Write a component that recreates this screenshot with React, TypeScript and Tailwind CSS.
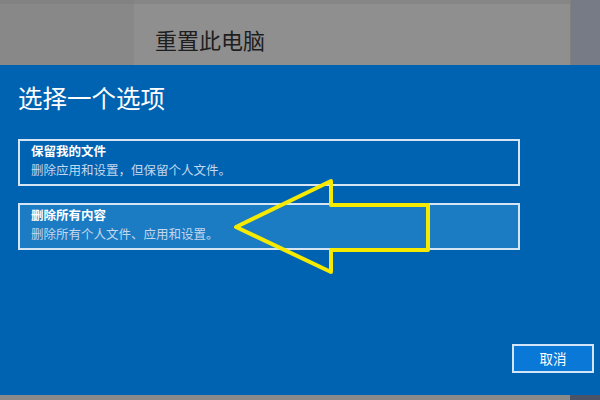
const font = { fontFamily: '"Noto Sans CJK SC", "Noto Sans", sans-serif' };

type OptionProps = {
  title: string;
  desc: string;
  active?: boolean;
};

const Option: React.FC<OptionProps> = ({ title, desc, active }) => (
  <div
    className={`w-[502px] h-[47px] border-2 border-[#d5e5f4] pl-[11px] pt-[1px] ${
      active ? "bg-[#1b7cc3]" : "bg-transparent"
    }`}
  >
    <div className="text-[12.5px] leading-[18px] font-bold text-white">{title}</div>
    <div className="text-[12.5px] leading-[19px] text-[#c3d7ee]">{desc}</div>
  </div>
);

export default function App() {
  return (
    <div className="w-[600px] h-[400px] overflow-hidden flex flex-col relative" style={font}>
      {/* Background window behind the dialog */}
      <div className="h-[65px] flex bg-[#8a8a8a]">
        <div className="w-[134px] flex flex-col">
          <div className="h-[4px] bg-[#828282]" />
          <div className="flex-1 bg-[#888888]" />
        </div>
        <div className="w-[436px] flex flex-col">
          <div className="h-[4px] bg-[#868686]" />
          <div className="flex-1 bg-[#8f8f8f] pl-[21px] pt-[20px]">
            <span className="text-[22px] leading-[30px] text-[#1e1e1e]">重置此电脑</span>
          </div>
        </div>
        <div className="flex-1 bg-[#767b86] border-l border-[#808080]" />
      </div>

      {/* Dialog */}
      <div className="h-[330px] bg-[#0063b1] flex flex-col pl-[18px]">
        <div className="mt-[17px] text-[24.5px] leading-[32px] font-normal text-white">选择一个选项</div>
        <div className="mt-[25px] flex flex-col gap-[17px]">
          <Option title="保留我的文件" desc="删除应用和设置，但保留个人文件。" />
          <Option title="删除所有内容" desc="删除所有个人文件、应用和设置。" active />
        </div>
        <button className="mt-auto mb-[22px] mr-[6px] self-end w-[82px] h-[29px] bg-[#0a78d6] border-2 border-[#d3e6f7] text-white text-[13.5px] leading-[25px]">
          取消
        </button>
      </div>

      {/* Bottom strip */}
      <div className="flex-1 flex">
        <div className="w-[570px] bg-[#8a8a8a]" />
        <div className="flex-1 bg-[#4b5466]" />
      </div>

      {/* Yellow arrow annotation */}
      <svg className="absolute left-0 top-0 pointer-events-none" width="600" height="400">
        <polygon
          points="236,227 331,181 331,205 428,205 428,250 331,250 331,272"
          fill="none"
          stroke="#f6ea00"
          strokeWidth="4"
          strokeLinejoin="round"
        />
      </svg>
    </div>
  );
}
